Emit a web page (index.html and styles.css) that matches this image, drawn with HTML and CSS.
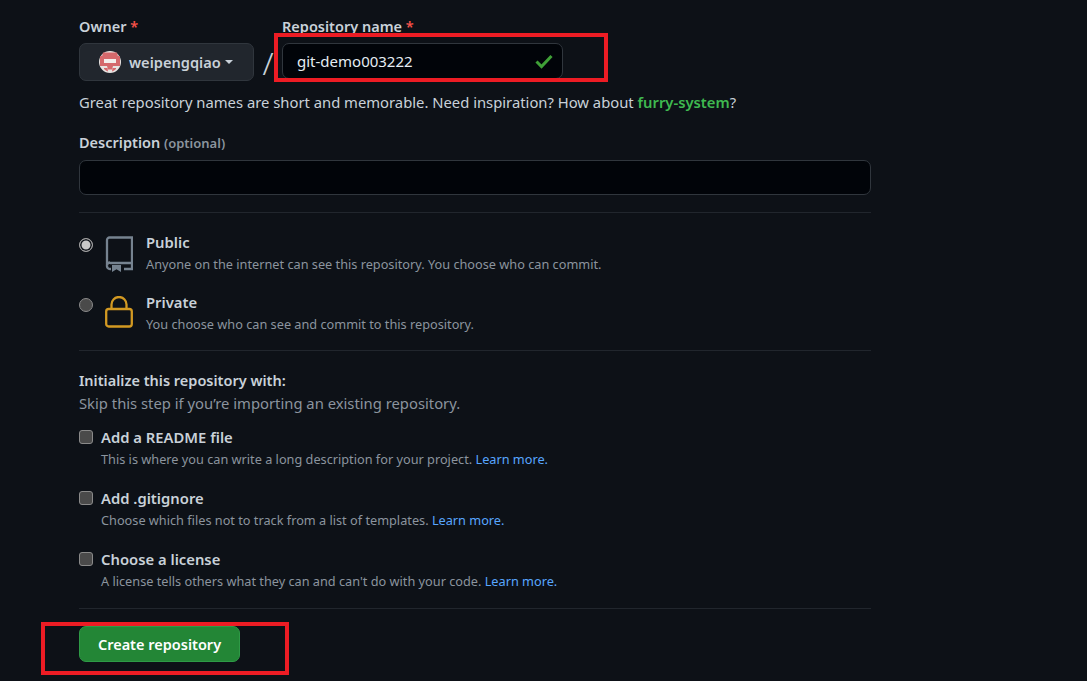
FILE: index.html
```html
<!DOCTYPE html>
<html lang="en">
<head>
<meta charset="utf-8">
<title>Create repository</title>
<link rel="stylesheet" href="styles.css">
</head>
<body>
<main class="form">
  <div class="owner-row">
    <div class="field owner-field">
      <div class="label">Owner <span class="req">*</span></div>
      <div class="owner-btn">
        <svg class="avatar" viewBox="0 0 22 22" width="22" height="22">
          <circle cx="11" cy="11" r="11" fill="#e8e3e1"/>
          <path d="M4 1.500h14l1 4H3z" fill="#d5696c"/>
          <path d="M1 5h20v10H14l-1 3.500H9L8 15H1z" fill="#d5696c"/>
          <rect x="5" y="8" width="12" height="4" fill="#f3eeec"/>
          <path d="M5 17h3.500l.5 3.500A11 11 0 0 1 5 18zM17 17h-3.500l-.5 3.500A11 11 0 0 0 17 18z" fill="#d5696c"/>
        </svg>
        <span class="owner-name">weipengqiao</span>
        <span class="caret"></span>
      </div>
    </div>
    <div class="slash">/</div>
    <div class="field name-field">
      <div class="label">Repository name <span class="req">*</span></div>
      <div class="input name-input">
        <span>git-demo003222</span>
        <svg class="check" viewBox="0 0 20 20" width="20" height="20"><path fill="none" stroke="#3fa037" stroke-width="3" d="M2.500 10.500l5 5L17.500 5"/></svg>
      </div>
    </div>
  </div>
  <p class="hint">Great repository names are short and memorable. Need inspiration? How about <a class="suggest">furry-system</a>?</p>
  <div class="label desc-label">Description <span class="optional">(optional)</span></div>
  <div class="input desc-input"></div>
  <hr class="rule rule-a">
  <div class="vis-row">
    <span class="radio radio-on"></span>
    <svg class="vis-icon" viewBox="0 0 28 36" width="28" height="36" fill="none" stroke="#768390" stroke-width="2.300">
      <path d="M2 29V4a2.500 2.500 0 0 1 2.500-2.500H27V27H5M2 29.500A3 3 0 0 1 5 26.500M2 29.500A3 3 0 0 0 5 33h1M19 33h8V27"/>
      <path d="M7 29h9v7l-4.500-2.800L7 36z" fill="#768390" stroke="none"/>
    </svg>
    <div class="vis-text">
      <div class="vis-title">Public</div>
      <div class="note">Anyone on the internet can see this repository. You choose who can commit.</div>
    </div>
  </div>
  <div class="vis-row vis-private">
    <span class="radio"></span>
    <svg class="vis-icon" viewBox="0 0 28 32" width="28" height="32" fill="none" stroke="#d29922" stroke-width="2.300">
      <rect x="1.200" y="13" width="25.600" height="17.500" rx="2.500"/>
      <path d="M6.500 13V8.500a7.500 7.500 0 0 1 15 0V13"/>
    </svg>
    <div class="vis-text">
      <div class="vis-title">Private</div>
      <div class="note">You choose who can see and commit to this repository.</div>
    </div>
  </div>
  <hr class="rule rule-b">
  <div class="init-title">Initialize this repository with:</div>
  <div class="init-sub">Skip this step if you’re importing an existing repository.</div>
  <div class="check-row">
    <span class="box"></span>
    <div>
      <div class="check-title">Add a README file</div>
      <div class="note">This is where you can write a long description for your project. <a class="link">Learn more.</a></div>
    </div>
  </div>
  <div class="check-row">
    <span class="box"></span>
    <div>
      <div class="check-title">Add .gitignore</div>
      <div class="note">Choose which files not to track from a list of templates. <a class="link">Learn more.</a></div>
    </div>
  </div>
  <div class="check-row">
    <span class="box"></span>
    <div>
      <div class="check-title">Choose a license</div>
      <div class="note">A license tells others what they can and can't do with your code. <a class="link">Learn more.</a></div>
    </div>
  </div>
  <hr class="rule rule-c">
  <div class="create-btn">Create repository</div>
</main>
<div class="mark mark-name"></div>
<div class="mark mark-create"></div>
</body>
</html>
```
FILE: styles.css
```css
* { box-sizing: border-box; }
html, body { margin: 0; height: 681px; overflow: hidden; }
body {
  position: relative;
  background: #0d1117;
  color: #c9d1d9;
  font-family: "Noto Sans", "Open Sans", sans-serif;
  font-size: 14.800px;
  line-height: 20px;
}
.form { width: 792px; margin-left: 79px; padding-top: 16px; }
.owner-row { display: flex; align-items: flex-start; height: 65px; }
.label { font-weight: 600; font-size: 14.500px; line-height: 20px; color: #c9d1d9; }
.req { color: #f85149; }
.field .label { margin-bottom: 7px; }
.owner-field { width: 175px; }
.owner-btn {
  display: flex; align-items: center; height: 38px; padding-left: 19px;
  background: #21262d; border: 1px solid #30363d; border-radius: 7px;
}
.avatar { flex: none; }
.owner-name { margin-left: 8px; font-weight: 600; font-size: 14.600px; color: #c9d1d9; }
.caret {
  margin-left: 4px; border: 4.500px solid transparent; border-top-color: #c9d1d9;
  border-bottom-width: 0;
}
.slash { width: 28px; padding-top: 27px; text-align: center; font-size: 32px; line-height: 40px; font-weight: 300; color: #c9d1d9; }
.name-field { width: 281px; }
.input {
  background: #010409; border: 1px solid #30363d; border-radius: 7px;
}
.name-input {
  display: flex; align-items: center; justify-content: space-between;
  height: 36px; padding: 0 8px 0 14px; color: #e6edf3; font-size: 15px;
}
.check { flex: none; }
.hint { margin: 11px 0 0; line-height: 20px; }
.suggest { color: #3fb950; font-weight: 600; }
.desc-label { margin-top: 20px; }
.optional { font-size: 13px; color: #8b949e; }
.desc-input { height: 35px; margin-top: 7px; }
.rule { height: 1px; margin: 0; border: 0; background: #21262d; }
.rule-a { margin-top: 17px; }
.vis-row { display: flex; align-items: flex-start; height: 60px; margin-top: 19px; }
.vis-private { margin-top: 0; }
.radio {
  flex: none; width: 14px; height: 14px; margin-top: 6px; border-radius: 50%;
  background: #4a4a4a; border: 1px solid #8a8a8a;
}
.radio-on { background: #c8c8c8; box-shadow: inset 0 0 0 1.500px #0d1117; border-color: #a0a0a0; }
.vis-icon { flex: none; margin: 4px 0 0 12px; }
.vis-text { margin: 0 0 0 13px; }
.vis-title { font-weight: 600; font-size: 14.800px; color: #c9d1d9; line-height: 20px; }
.note { font-size: 12.720px; line-height: 18px; color: #8b949e; margin-top: 3px; }
.rule-b { margin-top: -2px; }
.init-title { margin-top: 19px; font-weight: 600; font-size: 14.500px; line-height: 20px; }
.init-sub { margin-top: 3px; line-height: 20px; color: #8b949e; }
.check-row { display: flex; height: 61px; }
.init-sub + .check-row { margin-top: 14px; }
.box {
  flex: none; width: 14px; height: 14px; margin: 3px 8px 0 0; border-radius: 3px;
  background: #4a4a4a; border: 1px solid #8a8a8a;
}
.check-title { font-weight: 600; font-size: 14.800px; line-height: 20px; color: #c9d1d9; }
.check-row .note { margin-top: 3px; }
.link { color: #58a6ff; }
.rule-c { margin-top: -2px; }
.create-btn {
  display: flex; align-items: center; justify-content: center;
  width: 161px; height: 36px; margin-top: 17px;
  background: #238636; border: 1px solid #2e9a46; border-radius: 7px;
  color: #fff; font-weight: 600; font-size: 14.500px;
}
.mark { position: absolute; border: 4px solid #ed1c24; }
.mark-name { left: 274px; top: 33px; width: 334px; height: 49px; }
.mark-create { left: 41px; top: 622px; width: 248px; height: 53px; }
```
